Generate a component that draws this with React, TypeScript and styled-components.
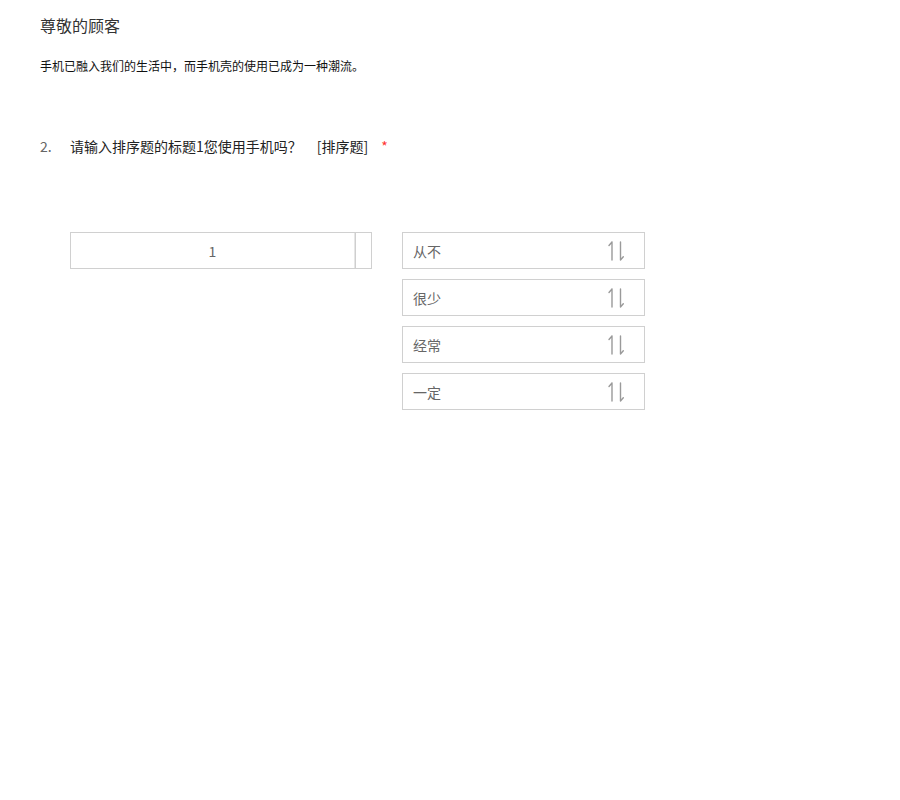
import React from "react";
import styled, { createGlobalStyle } from "styled-components";

const Global = createGlobalStyle`
  html, body { margin: 0; padding: 0; background: #fff; }
  body { font-family: "Microsoft YaHei", "Noto Sans CJK SC", "Liberation Sans", sans-serif; }
`;

const Page = styled.div`
  padding: 13px 40px 40px;
  color: #333;
`;

const Title = styled.div`
  font-size: 16px;
  line-height: 24px;
  color: #333;
`;

const Intro = styled.div`
  margin-top: 20px;
  font-size: 12px;
  line-height: 18px;
  color: #111;
`;

const Question = styled.div`
  margin-top: 61px;
  display: flex;
  align-items: center;
  font-size: 14px;
  line-height: 20px;
`;

const Num = styled.span`
  width: 30px;
  color: #666;
`;

const QText = styled.span`
  color: #222;
`;

const Tag = styled.span`
  margin-left: 15px;
  color: #222;
`;

const Star = styled.span`
  margin-left: 13px;
  color: #f33;
`;

const SortArea = styled.div`
  margin-top: 76px;
  padding-left: 30px;
  display: flex;
  gap: 30px;
  align-items: flex-start;
`;

const Slot = styled.div`
  width: 302px;
  height: 37px;
  box-sizing: border-box;
  border: 1px solid #d0d0d0;
  display: flex;
`;

const SlotNum = styled.div`
  flex: 1;
  display: flex;
  align-items: center;
  justify-content: center;
  font-size: 14px;
  color: #666;
`;

const SlotHandle = styled.div`
  width: 16px;
  border-left: 1px solid #e6e6e6;
  box-shadow: inset 1px 0 0 #cfcfcf;
`;

const Options = styled.div`
  display: flex;
  flex-direction: column;
  gap: 10px;
`;

const Option = styled.div`
  width: 243px;
  height: 37px;
  box-sizing: border-box;
  border: 1px solid #d0d0d0;
  display: flex;
  align-items: center;
  justify-content: space-between;
  padding: 0 20px 0 10px;
  font-size: 14px;
  color: #666;
`;

const SortIcon = () => (
  <svg width="16" height="20" viewBox="0 0 16 20" fill="none" stroke="#9a9a9a" strokeWidth="1.4" strokeLinecap="round">
    <path d="M4 1 V19 M4 1 L1 4.5" />
    <path d="M12.5 1 V19 M12.5 19 L15.3 15.8" />
  </svg>
);

const items = ["从不", "很少", "经常", "一定"];

export default function App() {
  return (
    <>
      <Global />
      <Page>
        <Title>尊敬的顾客</Title>
        <Intro>手机已融入我们的生活中，而手机壳的使用已成为一种潮流。</Intro>
        <Question>
          <Num>2.</Num>
          <QText>请输入排序题的标题1您使用手机吗？</QText>
          <Tag>[排序题]</Tag>
          <Star>*</Star>
        </Question>
        <SortArea>
          <Slot>
            <SlotNum>1</SlotNum>
            <SlotHandle />
          </Slot>
          <Options>
            {items.map((t) => (
              <Option key={t}>
                <span>{t}</span>
                <SortIcon />
              </Option>
            ))}
          </Options>
        </SortArea>
      </Page>
    </>
  );
}
